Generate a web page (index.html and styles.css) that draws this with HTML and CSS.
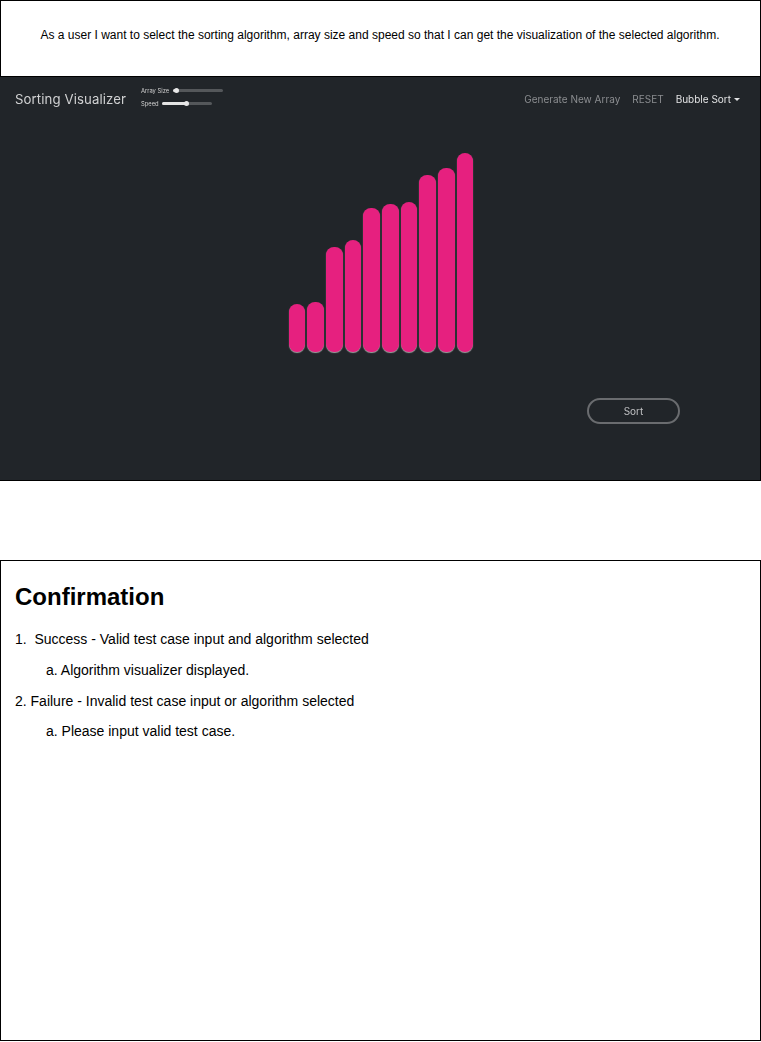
FILE: index.html
```html
<!DOCTYPE html>
<html>
	<head>
		<meta charset="UTF-8">
		<title>Sorting Visualizer</title>
		<link rel="stylesheet" href="styles.css">
	</head>
	<body>
		<div class="story">
			<p>As a user I want to select the sorting algorithm, array size and speed so that I can get the visualization of the selected algorithm.</p>
		</div>
		<div class="app">
			<div class="app-inner">
				<div class="nav">
					<span class="brand">Sorting Visualizer</span>
					<div class="sliders">
						<div class="slider-row">
							<span class="slider-label">Array Size</span>
							<div class="track track-size"><i class="fill fill-size"></i><b class="thumb"></b></div>
						</div>
						<div class="slider-row">
							<span class="slider-label">Speed</span>
							<div class="track track-speed"><i class="fill fill-speed"></i><b class="thumb"></b></div>
						</div>
					</div>
					<div class="links">
						<span class="link">Generate New Array</span>
						<span class="link">RESET</span>
						<span class="link link-on">Bubble Sort<i class="caret"></i></span>
					</div>
				</div>
				<div class="bars">
					<div class="bar" style="height:48px"></div>
					<div class="bar" style="height:50px"></div>
					<div class="bar" style="height:105px"></div>
					<div class="bar" style="height:112px"></div>
					<div class="bar" style="height:144px"></div>
					<div class="bar" style="height:148px"></div>
					<div class="bar" style="height:150px"></div>
					<div class="bar" style="height:177px"></div>
					<div class="bar" style="height:184px"></div>
					<div class="bar" style="height:199px"></div>
				</div>
				<div class="sort-row">
					<div class="sort-btn">Sort</div>
				</div>
			</div>
		</div>
		<div class="confirm">
			<h2>Confirmation</h2>
			<p>1.&nbsp; Success - Valid test case input and algorithm selected</p>
			<p class="sub">a. Algorithm visualizer displayed.</p>
			<p>2. Failure - Invalid test case input or algorithm selected</p>
			<p class="sub">a. Please input valid test case.</p>
		</div>
	</body>
</html>
```

FILE: styles.css
```css
*{
	margin: 0px;
	padding: 0px;
	box-sizing: border-box;
}
body{
	background: #fff;
	color: #000;
	font-family: "Liberation Sans", Arial, sans-serif;
}
.story{
	height: 76px;
	border: 1px solid #000;
	border-bottom: 0px;
	padding-bottom: 8px;
	padding-right: 1px;
	display: flex;
	align-items: center;
	justify-content: center;
}
.story p{
	font-size: 12px;
}
.app{
	height: 405px;
	background: #212529;
	border: 1px solid #000;
	border-width: 1px 1px 1px 0px;
	overflow: hidden;
}
.app-inner{
	filter: blur(0.7px);
	font-family: Inter, sans-serif;
}
.nav{
	height: 47px;
	display: flex;
	align-items: center;
	padding: 0px 20px 3px 15px;
}
.brand{
	width: 126px;
	font-size: 13.2px;
	letter-spacing: 0.1px;
	color: #d0d1d2;
}
.sliders{
	display: flex;
	flex-direction: column;
	gap: 7px;
	margin-bottom: 4px;
}
.slider-row{
	display: flex;
	align-items: center;
	height: 6px;
}
.slider-label{
	font-size: 5.8px;
	color: #d0d0d0;
	margin-right: 2px;
}
.track{
	height: 3px;
	background: #54575a;
	border-radius: 2px;
	position: relative;
}
.track-size{
	width: 50px;
	margin-left: 2px;
}
.track-speed{
	width: 50px;
	margin-left: 1px;
}
.fill{
	display: block;
	height: 3px;
	background: #e4e4e4;
	border-radius: 2px;
}
.fill-size{
	width: 3px;
}
.fill-speed{
	width: 24px;
}
.thumb{
	position: absolute;
	top: -1px;
	width: 5px;
	height: 5px;
	border-radius: 50%;
	background: #e8e8e8;
}
.track-size .thumb{
	left: 1px;
}
.track-speed .thumb{
	left: 22px;
}
.links{
	margin-left: auto;
	display: flex;
	gap: 12px;
	font-size: 10px;
}
.link{
	color: #8b8d90;
}
.link-on{
	color: #e2e3e4;
	display: flex;
	align-items: center;
}
.caret{
	width: 0px;
	height: 0px;
	margin-left: 3px;
	border: 3px solid transparent;
	border-top-color: #e2e3e4;
	border-bottom: 0px;
}
.bars{
	height: 228px;
	padding-left: 2px;
	display: flex;
	align-items: flex-end;
	justify-content: center;
	gap: 2.1px;
}
.bar{
	width: 16.6px;
	background: #e6207f;
	border-radius: 8px;
	box-shadow: 0px 1px 1px #a0a0a0;
}
.sort-row{
	display: flex;
	justify-content: flex-end;
	padding-right: 80px;
	margin-top: 46px;
}
.sort-btn{
	width: 93px;
	height: 26px;
	border: 2px solid #6a6c6f;
	border-radius: 13px;
	color: #c0c1c3;
	font-size: 10px;
	display: flex;
	align-items: center;
	justify-content: center;
}
.confirm{
	margin-top: 79px;
	height: 481px;
	border: 1px solid #000;
	padding: 21px 14px;
}
.confirm h2{
	font-size: 24px;
	line-height: 30px;
	margin-bottom: 19px;
}
.confirm p{
	font-size: 14px;
	line-height: 16px;
	margin-bottom: 14.5px;
}
.confirm .sub{
	padding-left: 31px;
	margin-bottom: 15px;
}
```
